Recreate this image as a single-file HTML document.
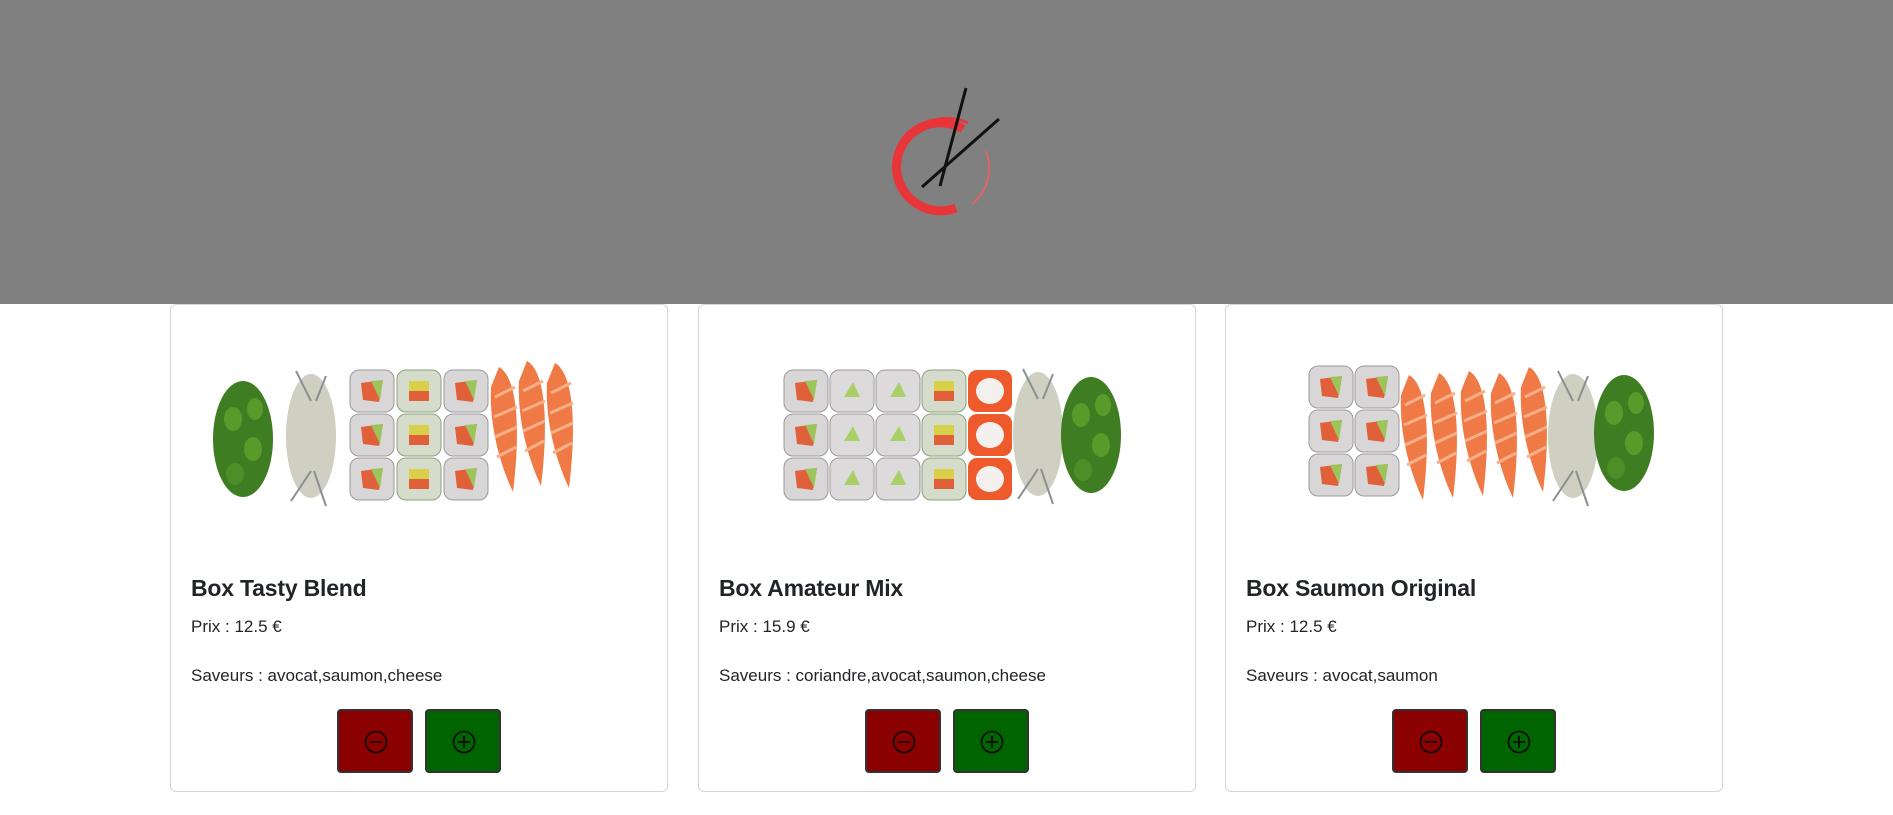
<!DOCTYPE html>
<html><head><meta charset="utf-8"><style>
*{margin:0;padding:0;box-sizing:border-box}
body{width:1893px;height:815px;background:#fff;font-family:"Liberation Sans",sans-serif;color:#212529;position:relative;overflow:hidden}
.hdr{position:absolute;left:0;top:0;width:1893px;height:304px;background:#808080}
.card{position:absolute;top:304px;width:498px;height:488px;border:1px solid #d6d6d6;border-radius:6px;background:#fff}
.card svg.pic{position:absolute;left:0;top:0}
.t{position:absolute;left:20px;top:270px;font-size:23px;font-weight:bold;letter-spacing:-0.2px}
.p{position:absolute;left:20px;top:312px;font-size:17px}
.s{position:absolute;left:20px;top:361px;font-size:17px}
.b{position:absolute;top:404px;width:76px;height:64px;border:2px solid #333;border-radius:4px}
.m{left:166px;background:#8b0000}.pl{left:254px;background:#006400}
.b svg{position:absolute;left:25px;top:19px}
</style></head><body>
<div class="hdr"></div>
<svg style="position:absolute;left:0;top:0" width="1893" height="304">
<path d="M963 129 A44 44 0 1 0 956 208" fill="none" stroke="#e8353a" stroke-width="9"/>
<path d="M968 123 A50 50 0 0 0 900 150" fill="none" stroke="#e8353a" stroke-width="2.5"/>
<path d="M986 151 A46 46 0 0 1 972 204" fill="none" stroke="#d66" stroke-width="2"/>
<line x1="966" y1="88" x2="940" y2="186" stroke="#111" stroke-width="3"/>
<line x1="999" y1="119" x2="922" y2="187" stroke="#111" stroke-width="3"/>
</svg>
<svg width="0" height="0" style="position:absolute">
<defs>
<g id="ra"><rect x="1" y="1" width="44" height="42" rx="9" fill="#d9d6d8" stroke="#9a9a9a"/><path d="M12 14 L34 11 L30 33 L14 31Z" fill="#e0603a"/><path d="M22 12 L34 11 L31 31Z" fill="#9cc45a"/></g>
<g id="rv"><rect x="1" y="1" width="44" height="42" rx="9" fill="#dcdadb" stroke="#9a9a9a"/><path d="M15 28 L31 28 L24 13Z" fill="#a9d066"/></g>
<g id="rg"><rect x="1" y="1" width="44" height="42" rx="9" fill="#d5dccc" stroke="#8fa07a"/><path d="M13 14 H33 V32 H13Z" fill="#e0603a"/><path d="M13 12 H33 V22 H13Z" fill="#d8d04a"/></g>
<g id="ro"><rect x="1" y="1" width="44" height="42" rx="9" fill="#ef5a2c"/><ellipse cx="23" cy="22" rx="14" ry="13" fill="#f4f0ee"/></g>
<g id="sa"><path d="M10 0 C28 10 32 60 24 125 C12 100 0 60 2 20Z" fill="#f07a45"/><path d="M6 30 L26 20 M5 50 L28 40 M6 70 L28 60 M8 90 L27 80" stroke="#f9b08a" stroke-width="3"/></g>
<g id="ed"><ellipse cx="30" cy="60" rx="30" ry="58" fill="#3f7d22"/><ellipse cx="20" cy="40" rx="9" ry="12" fill="#5a9a2a"/><ellipse cx="40" cy="70" rx="9" ry="12" fill="#5a9a2a"/><ellipse cx="22" cy="95" rx="9" ry="11" fill="#4e8e26"/><ellipse cx="42" cy="30" rx="8" ry="11" fill="#5a9a2a"/></g>
<g id="sp"><ellipse cx="25" cy="65" rx="25" ry="62" fill="#cfd0c2"/><path d="M5 130 L25 100 M40 135 L28 100 M10 0 L25 30 M40 5 L30 30" stroke="#8a8f92" stroke-width="2"/></g>
</defs></svg>

<div class="card" style="left:170px">
<svg class="pic" width="498" height="250">
<use href="#ed" x="42" y="74"/><use href="#sp" x="115" y="66"/>
<use href="#ra" x="178" y="64"/><use href="#rg" x="225" y="64"/><use href="#ra" x="272" y="64"/>
<use href="#ra" x="178" y="108"/><use href="#rg" x="225" y="108"/><use href="#ra" x="272" y="108"/>
<use href="#ra" x="178" y="152"/><use href="#rg" x="225" y="152"/><use href="#ra" x="272" y="152"/>
<use href="#sa" x="318" y="62"/><use href="#sa" x="346" y="56"/><use href="#sa" x="374" y="58"/>
</svg>
<div class="t">Box Tasty Blend</div><div class="p">Prix : 12.5 €</div><div class="s">Saveurs : avocat,saumon,cheese</div>
<div class="b m"><svg width="24" height="24"><circle cx="12" cy="12" r="10.5" fill="none" stroke="#000" stroke-width="1.5"/><line x1="6" y1="12" x2="18" y2="12" stroke="#000" stroke-width="1.5"/></svg></div>
<div class="b pl"><svg width="24" height="24"><circle cx="12" cy="12" r="10.5" fill="none" stroke="#000" stroke-width="1.5"/><line x1="6" y1="12" x2="18" y2="12" stroke="#000" stroke-width="1.5"/><line x1="12" y1="6" x2="12" y2="18" stroke="#000" stroke-width="1.5"/></svg></div>
</div>

<div class="card" style="left:698px">
<svg class="pic" width="498" height="250">
<use href="#ra" x="84" y="64"/><use href="#rv" x="130" y="64"/><use href="#rv" x="176" y="64"/><use href="#rg" x="222" y="64"/><use href="#ro" x="268" y="64"/>
<use href="#ra" x="84" y="108"/><use href="#rv" x="130" y="108"/><use href="#rv" x="176" y="108"/><use href="#rg" x="222" y="108"/><use href="#ro" x="268" y="108"/>
<use href="#ra" x="84" y="152"/><use href="#rv" x="130" y="152"/><use href="#rv" x="176" y="152"/><use href="#rg" x="222" y="152"/><use href="#ro" x="268" y="152"/>
<use href="#sp" x="314" y="64"/><use href="#ed" x="362" y="70"/>
</svg>
<div class="t">Box Amateur Mix</div><div class="p">Prix : 15.9 €</div><div class="s">Saveurs : coriandre,avocat,saumon,cheese</div>
<div class="b m"><svg width="24" height="24"><circle cx="12" cy="12" r="10.5" fill="none" stroke="#000" stroke-width="1.5"/><line x1="6" y1="12" x2="18" y2="12" stroke="#000" stroke-width="1.5"/></svg></div>
<div class="b pl"><svg width="24" height="24"><circle cx="12" cy="12" r="10.5" fill="none" stroke="#000" stroke-width="1.5"/><line x1="6" y1="12" x2="18" y2="12" stroke="#000" stroke-width="1.5"/><line x1="12" y1="6" x2="12" y2="18" stroke="#000" stroke-width="1.5"/></svg></div>
</div>

<div class="card" style="left:1225px">
<svg class="pic" width="498" height="250">
<use href="#ra" x="82" y="60"/><use href="#ra" x="128" y="60"/>
<use href="#ra" x="82" y="104"/><use href="#ra" x="128" y="104"/>
<use href="#ra" x="82" y="148"/><use href="#ra" x="128" y="148"/>
<use href="#sa" x="173" y="70"/><use href="#sa" x="203" y="68"/><use href="#sa" x="233" y="66"/><use href="#sa" x="263" y="68"/><use href="#sa" x="293" y="62"/>
<use href="#sp" x="322" y="66"/><use href="#ed" x="368" y="68"/>
</svg>
<div class="t">Box Saumon Original</div><div class="p">Prix : 12.5 €</div><div class="s">Saveurs : avocat,saumon</div>
<div class="b m"><svg width="24" height="24"><circle cx="12" cy="12" r="10.5" fill="none" stroke="#000" stroke-width="1.5"/><line x1="6" y1="12" x2="18" y2="12" stroke="#000" stroke-width="1.5"/></svg></div>
<div class="b pl"><svg width="24" height="24"><circle cx="12" cy="12" r="10.5" fill="none" stroke="#000" stroke-width="1.5"/><line x1="6" y1="12" x2="18" y2="12" stroke="#000" stroke-width="1.5"/><line x1="12" y1="6" x2="12" y2="18" stroke="#000" stroke-width="1.5"/></svg></div>
</div>
</body></html>
